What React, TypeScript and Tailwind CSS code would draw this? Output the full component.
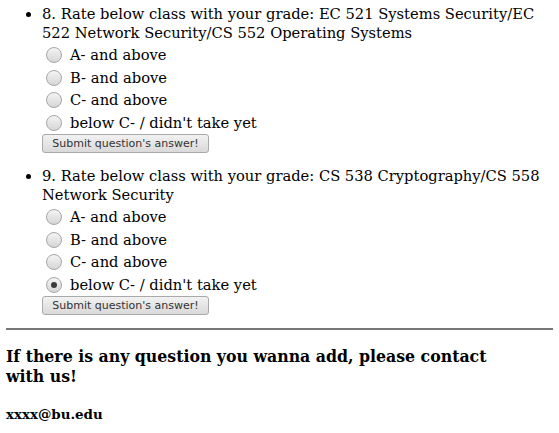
import { useState } from "react";

type Question = {
    num: number;
    title: string;
    options: string[];
    picked: number | null;
};

const QUESTIONS: Question[] = [
    {
        num: 8,
        title: "Rate below class with your grade: EC 521 Systems Security/EC 522 Network Security/CS 552 Operating Systems",
        options: ["A- and above", "B- and above", "C- and above", "below C- / didn't take yet"],
        picked: null,
    },
    {
        num: 9,
        title: "Rate below class with your grade: CS 538 Cryptography/CS 558 Network Security",
        options: ["A- and above", "B- and above", "C- and above", "below C- / didn't take yet"],
        picked: 3,
    },
];

const Radio = ({ checked }: { checked: boolean }) => (
    <span className="w-[16px] h-[16px] rounded-full border border-[#a6a6a6] bg-gradient-to-b from-[#f4f4f4] to-[#d6d6d6] flex items-center justify-center shrink-0">
        {checked && <span className="w-[6px] h-[6px] rounded-full bg-[#3a3a3a]" />}
    </span>
);

const QuestionItem = ({ q }: { q: Question }) => {
    const [picked, setPicked] = useState<number | null>(q.picked);
    return (
        <li className="list-disc">
            <div className="leading-[18.5px]">
                {q.num}. {q.title}
            </div>
            <div className="mt-[2px] flex flex-col">
                {q.options.map((opt, i) => (
                    <label
                        key={opt}
                        onClick={() => setPicked(i)}
                        className="h-[22.5px] flex items-center gap-[8px] pl-[4px] cursor-pointer"
                    >
                        <Radio checked={picked === i} />
                        <span>{opt}</span>
                    </label>
                ))}
            </div>
            <button className="block h-[19px] w-[167px] rounded-[3px] border border-[#a9a9a9] bg-gradient-to-b from-[#f2f2f2] to-[#d9d9d9] text-[11px] text-[#333] font-['DejaVu_Sans',sans-serif] leading-none">
                Submit question's answer!
            </button>
        </li>
    );
};

export default function App() {
    return (
        <div className="w-[559px] h-[433px] bg-white text-black font-['DejaVu_Serif',serif] text-[14.7px] px-[6px] pt-[3px]">
            <ul className="pl-[36px] flex flex-col gap-[12px]">
                {QUESTIONS.map((q) => (
                    <QuestionItem key={q.num} q={q} />
                ))}
            </ul>
            <hr className="mt-[13px] border-t-2 border-[#777]" />
            <h3 className="mt-[17px] max-w-[510px] font-bold text-[15.75px] leading-[20px]">
                If there is any question you wanna add, please contact with us!
            </h3>
            <h4 className="mt-[17px] font-bold text-[13.4px]">xxxx@bu.edu</h4>
        </div>
    );
}
